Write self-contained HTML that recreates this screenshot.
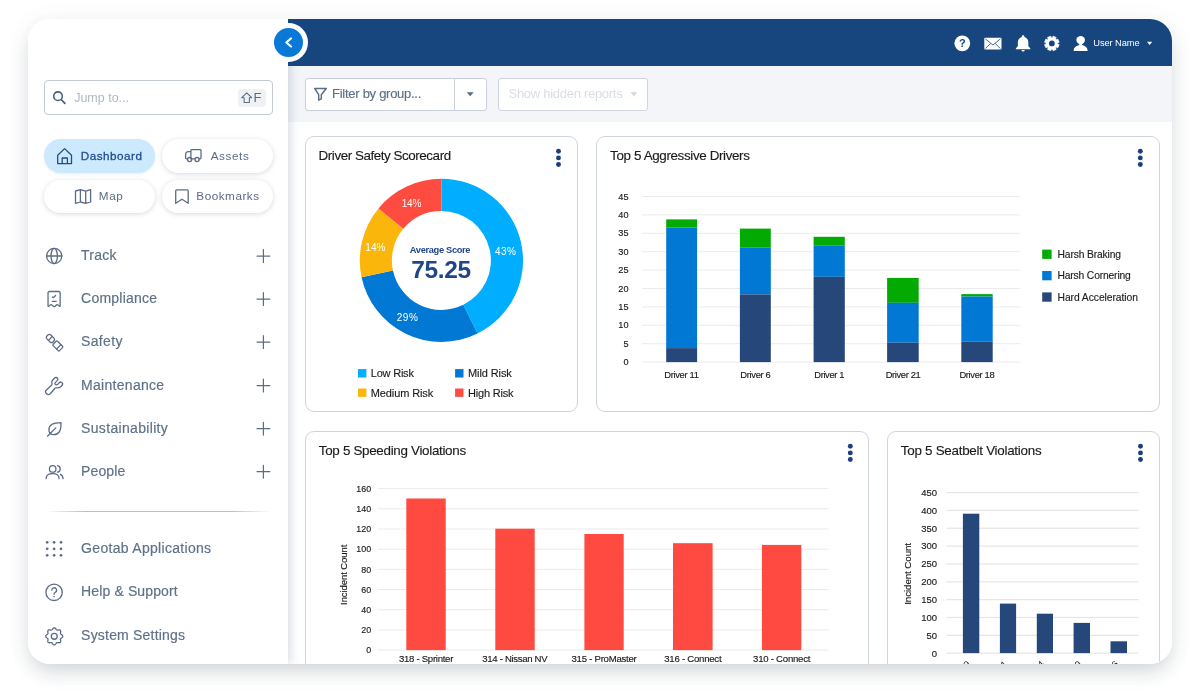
<!DOCTYPE html>
<html lang="en">
<head>
<meta charset="utf-8">
<title>Fleet Dashboard</title>
<style>
*{box-sizing:border-box;margin:0;padding:0}
html,body{width:1200px;height:695px;background:#fff;overflow:hidden}
body{font-family:"Liberation Sans",sans-serif;position:relative;color:#222}
#frame{position:absolute;left:28px;top:19px;width:1144px;height:645px;border-radius:22px;background:#fff;
 box-shadow:0 10px 20px -4px rgba(75,90,105,.24),0 2px 24px rgba(75,90,105,.075)}
#clip{position:absolute;left:28px;top:19px;width:1144px;height:645px;border-radius:22px;overflow:hidden;background:#fff}
#inner{position:absolute;left:-28px;top:-19px;width:1200px;height:695px;will-change:transform}
#header{position:absolute;left:288.3px;top:19px;width:884px;height:47.4px;background:#17467f}
#filterbar{position:absolute;left:288px;top:66px;width:884px;height:55.5px;background:#f3f5f9}
#sidebar{position:absolute;left:28px;top:19px;width:260.3px;height:645px;background:#fff;
 box-shadow:2px 0 10px rgba(80,95,120,.23)}
.t{position:absolute;white-space:nowrap;line-height:1}
.card{position:absolute;border:1px solid #ced4de;border-radius:9px;background:#fff}
.box{position:absolute;border:1px solid #cad0db;border-radius:3px;background:#fff}
.pill{position:absolute;height:33.5px;border-radius:17px;background:#fff;box-shadow:0 1px 5px rgba(90,105,130,.25)}
.pill.on{background:#cce9fd;box-shadow:0 1px 3px rgba(90,105,130,.12)}
svg{position:absolute;left:0;top:0;overflow:visible}
.ic{fill:none;stroke:#5a6d86;stroke-width:1.3;stroke-linecap:round;stroke-linejoin:round}
</style>
</head>
<body>
<div id="frame"></div>
<div id="clip"><div id="inner">

<div id="filterbar"></div>

<!-- filter controls -->
<div class="box" style="left:305px;top:78px;width:182px;height:32.5px"></div>
<div style="position:absolute;left:454px;top:78px;width:1px;height:32px;background:#cad0db"></div>
<div class="box" style="left:497.5px;top:78px;width:150px;height:32.5px;border-color:#d0d4df"></div>

<!-- cards -->
<div class="card" style="left:304.5px;top:135.5px;width:273.5px;height:276.5px"></div>
<div class="card" style="left:596px;top:135.5px;width:564px;height:276.5px"></div>
<div class="card" style="left:304.5px;top:430.5px;width:564.5px;height:260px"></div>
<div class="card" style="left:887px;top:430.5px;width:273px;height:260px"></div>

<svg width="1200" height="695" viewBox="0 0 1200 695">
<path d="M441.40 178.80 A81.6 81.6 0 0 1 477.53 333.57 L463.32 304.78 A49.5 49.5 0 0 0 441.40 210.90 Z" fill="#01adfe"/>
<path d="M477.53 333.57 A81.6 81.6 0 0 1 361.55 277.20 L392.96 270.59 A49.5 49.5 0 0 0 463.32 304.78 Z" fill="#0078d4"/>
<path d="M361.55 277.20 A81.6 81.6 0 0 1 378.53 208.39 L403.26 228.85 A49.5 49.5 0 0 0 392.96 270.59 Z" fill="#fab60b"/>
<path d="M378.53 208.39 A81.6 81.6 0 0 1 441.40 178.80 L441.40 210.90 A49.5 49.5 0 0 0 403.26 228.85 Z" fill="#fe4c41"/>
<rect x="358" y="369.1" width="8.4" height="8.4" fill="#01adfe"/>
<rect x="455.1" y="369.1" width="8.4" height="8.4" fill="#0078d4"/>
<rect x="358" y="388.5" width="8.4" height="8.4" fill="#fab60b"/>
<rect x="455.1" y="388.5" width="8.4" height="8.4" fill="#fe4c41"/>
<circle cx="558.5" cy="151.3" r="2.45" fill="#1a3f7e"/>
<circle cx="558.5" cy="157.9" r="2.45" fill="#1a3f7e"/>
<circle cx="558.5" cy="164.5" r="2.45" fill="#1a3f7e"/>
<circle cx="1140.3" cy="151.3" r="2.45" fill="#1a3f7e"/>
<circle cx="1140.3" cy="157.9" r="2.45" fill="#1a3f7e"/>
<circle cx="1140.3" cy="164.5" r="2.45" fill="#1a3f7e"/>
<circle cx="850.3" cy="446.3" r="2.45" fill="#1a3f7e"/>
<circle cx="850.3" cy="452.9" r="2.45" fill="#1a3f7e"/>
<circle cx="850.3" cy="459.5" r="2.45" fill="#1a3f7e"/>
<circle cx="1140.5" cy="446.3" r="2.45" fill="#1a3f7e"/>
<circle cx="1140.5" cy="452.9" r="2.45" fill="#1a3f7e"/>
<circle cx="1140.5" cy="459.5" r="2.45" fill="#1a3f7e"/>
<rect x="642" y="196.00" width="378.5" height="1" fill="#ebebeb"/>
<rect x="642" y="214.40" width="378.5" height="1" fill="#ebebeb"/>
<rect x="642" y="232.80" width="378.5" height="1" fill="#ebebeb"/>
<rect x="642" y="251.20" width="378.5" height="1" fill="#ebebeb"/>
<rect x="642" y="269.60" width="378.5" height="1" fill="#ebebeb"/>
<rect x="642" y="288.00" width="378.5" height="1" fill="#ebebeb"/>
<rect x="642" y="306.40" width="378.5" height="1" fill="#ebebeb"/>
<rect x="642" y="324.80" width="378.5" height="1" fill="#ebebeb"/>
<rect x="642" y="343.20" width="378.5" height="1" fill="#ebebeb"/>
<rect x="642" y="361.60" width="378.5" height="1" fill="#ebebeb"/>
<rect x="666.2" y="219.4" width="30.9" height="8.2" fill="#02aa02"/>
<rect x="666.2" y="227.6" width="30.9" height="120.5" fill="#0078d4"/>
<rect x="666.2" y="348.1" width="30.9" height="14.0" fill="#25477a"/>
<rect x="739.9" y="228.6" width="30.9" height="19.1" fill="#02aa02"/>
<rect x="739.9" y="247.7" width="30.9" height="46.7" fill="#0078d4"/>
<rect x="739.9" y="294.4" width="30.9" height="67.7" fill="#25477a"/>
<rect x="813.6" y="236.8" width="31.2" height="8.5" fill="#02aa02"/>
<rect x="813.6" y="245.3" width="31.2" height="31.5" fill="#0078d4"/>
<rect x="813.6" y="276.8" width="31.2" height="85.3" fill="#25477a"/>
<rect x="887.1" y="277.9" width="31.6" height="24.9" fill="#02aa02"/>
<rect x="887.1" y="302.8" width="31.6" height="39.9" fill="#0078d4"/>
<rect x="887.1" y="342.7" width="31.6" height="19.4" fill="#25477a"/>
<rect x="961.3" y="294.1" width="31.4" height="2.4" fill="#02aa02"/>
<rect x="961.3" y="296.5" width="31.4" height="45.0" fill="#0078d4"/>
<rect x="961.3" y="341.5" width="31.4" height="20.6" fill="#25477a"/>
<rect x="1042.2" y="249.6" width="9.4" height="9.3" fill="#02aa02"/>
<rect x="1042.2" y="271.0" width="9.4" height="9.3" fill="#0078d4"/>
<rect x="1042.2" y="292.4" width="9.4" height="9.3" fill="#25477a"/>
<rect x="378" y="488.10" width="450.6" height="1" fill="#ebebeb"/>
<rect x="378" y="508.29" width="450.6" height="1" fill="#ebebeb"/>
<rect x="378" y="528.48" width="450.6" height="1" fill="#ebebeb"/>
<rect x="378" y="548.67" width="450.6" height="1" fill="#ebebeb"/>
<rect x="378" y="568.86" width="450.6" height="1" fill="#ebebeb"/>
<rect x="378" y="589.05" width="450.6" height="1" fill="#ebebeb"/>
<rect x="378" y="609.24" width="450.6" height="1" fill="#ebebeb"/>
<rect x="378" y="629.43" width="450.6" height="1" fill="#ebebeb"/>
<rect x="378" y="649.62" width="450.6" height="1" fill="#ebebeb"/>
<rect x="406.3" y="498.5" width="39.4" height="151.6" fill="#fe4a40"/>
<rect x="495.3" y="528.7" width="39.4" height="121.4" fill="#fe4a40"/>
<rect x="584.4" y="534.0" width="39.3" height="116.1" fill="#fe4a40"/>
<rect x="673.0" y="543.2" width="39.6" height="106.9" fill="#fe4a40"/>
<rect x="761.9" y="544.9" width="39.4" height="105.2" fill="#fe4a40"/>
<rect x="946.5" y="492.00" width="192.2" height="1.2" fill="#e6e6e6"/>
<rect x="946.5" y="509.84" width="192.2" height="1.2" fill="#e6e6e6"/>
<rect x="946.5" y="527.68" width="192.2" height="1.2" fill="#e6e6e6"/>
<rect x="946.5" y="545.52" width="192.2" height="1.2" fill="#e6e6e6"/>
<rect x="946.5" y="563.36" width="192.2" height="1.2" fill="#e6e6e6"/>
<rect x="946.5" y="581.20" width="192.2" height="1.2" fill="#e6e6e6"/>
<rect x="946.5" y="599.04" width="192.2" height="1.2" fill="#e6e6e6"/>
<rect x="946.5" y="616.88" width="192.2" height="1.2" fill="#e6e6e6"/>
<rect x="946.5" y="634.72" width="192.2" height="1.2" fill="#e6e6e6"/>
<rect x="946.5" y="652.56" width="192.2" height="1.2" fill="#e6e6e6"/>
<rect x="962.9" y="513.7" width="16.4" height="139.4" fill="#25477a"/>
<rect x="999.9" y="603.6" width="16.2" height="49.5" fill="#25477a"/>
<rect x="1036.8" y="613.7" width="16.2" height="39.4" fill="#25477a"/>
<rect x="1073.6" y="622.9" width="16.4" height="30.2" fill="#25477a"/>
<rect x="1110.5" y="641.3" width="16.5" height="11.8" fill="#25477a"/>
<path d="M314.7 88.5 H326.3 L321.3 94.7 V98.9 L318.7 100.2 V94.7 Z" fill="none" stroke="#5a6d86" stroke-width="1.45" stroke-linejoin="round"/>
<path d="M466.7 92.2 H473.7 L470.2 96.2 Z" fill="#5a6d86"/>
<path d="M630.4 92.2 H637.4 L633.9 96.2 Z" fill="#d2d6df"/>
</svg>
<div class="t" style="font-size:13px;color:#5e7189;top:87.33px;-webkit-text-stroke:0.15px;letter-spacing:-0.279px;left:332.10px;">Filter by group...</div>
<div class="t" style="font-size:13px;color:#dadde6;top:87.33px;letter-spacing:-0.281px;left:508.50px;">Show hidden reports</div>
<div class="t" style="font-size:13.4px;color:#1c1c1c;top:149.43px;-webkit-text-stroke:0.14px;letter-spacing:-0.438px;left:318.60px;">Driver Safety Scorecard</div>
<div class="t" style="font-size:13.4px;color:#1c1c1c;top:149.43px;-webkit-text-stroke:0.14px;letter-spacing:-0.361px;left:610.10px;">Top 5 Aggressive Drivers</div>
<div class="t" style="font-size:13.4px;color:#1c1c1c;top:444.43px;-webkit-text-stroke:0.14px;letter-spacing:-0.305px;left:318.80px;">Top 5 Speeding Violations</div>
<div class="t" style="font-size:13.4px;color:#1c1c1c;top:444.43px;-webkit-text-stroke:0.14px;letter-spacing:-0.265px;left:900.80px;">Top 5 Seatbelt Violations</div>
<div class="t" style="font-size:10px;color:#ffffff;top:198.50px;letter-spacing:-0.208px;left:411.40px;transform:translate(-50%,0);">14%</div>
<div class="t" style="font-size:10px;color:#ffffff;top:242.90px;letter-spacing:0.042px;left:375.40px;transform:translate(-50%,0);">14%</div>
<div class="t" style="font-size:10px;color:#ffffff;top:247.10px;letter-spacing:0.342px;left:505.60px;transform:translate(-50%,0);">43%</div>
<div class="t" style="font-size:10px;color:#ffffff;top:313.10px;letter-spacing:0.542px;left:407.50px;transform:translate(-50%,0);">29%</div>
<div class="t" style="font-size:9.3px;color:#1f4788;top:245.84px;font-weight:700;letter-spacing:-0.340px;left:440.00px;transform:translate(-50%,0);">Average Score</div>
<div class="t" style="font-size:24.5px;color:#1f4788;top:258.30px;font-weight:700;letter-spacing:-0.378px;left:441.00px;transform:translate(-50%,0);">75.25</div>
<div class="t" style="font-size:11px;color:#1c1c1c;top:368.21px;-webkit-text-stroke:0.14px;letter-spacing:-0.218px;left:370.80px;">Low Risk</div>
<div class="t" style="font-size:11px;color:#1c1c1c;top:368.21px;-webkit-text-stroke:0.14px;letter-spacing:-0.103px;left:468.00px;">Mild Risk</div>
<div class="t" style="font-size:11px;color:#1c1c1c;top:387.61px;-webkit-text-stroke:0.14px;letter-spacing:-0.118px;left:370.80px;">Medium Risk</div>
<div class="t" style="font-size:11px;color:#1c1c1c;top:387.61px;-webkit-text-stroke:0.14px;letter-spacing:-0.197px;left:468.00px;">High Risk</div>
<div class="t" style="font-size:9.2px;color:#1a1a1a;top:192.59px;-webkit-text-stroke:0.14px;right:571.50px;">45</div>
<div class="t" style="font-size:9.2px;color:#1a1a1a;top:210.99px;-webkit-text-stroke:0.14px;right:571.50px;">40</div>
<div class="t" style="font-size:9.2px;color:#1a1a1a;top:229.39px;-webkit-text-stroke:0.14px;right:571.50px;">35</div>
<div class="t" style="font-size:9.2px;color:#1a1a1a;top:247.79px;-webkit-text-stroke:0.14px;right:571.50px;">30</div>
<div class="t" style="font-size:9.2px;color:#1a1a1a;top:266.19px;-webkit-text-stroke:0.14px;right:571.50px;">25</div>
<div class="t" style="font-size:9.2px;color:#1a1a1a;top:284.59px;-webkit-text-stroke:0.14px;right:571.50px;">20</div>
<div class="t" style="font-size:9.2px;color:#1a1a1a;top:302.99px;-webkit-text-stroke:0.14px;right:571.50px;">15</div>
<div class="t" style="font-size:9.2px;color:#1a1a1a;top:321.39px;-webkit-text-stroke:0.14px;right:571.50px;">10</div>
<div class="t" style="font-size:9.2px;color:#1a1a1a;top:339.79px;-webkit-text-stroke:0.14px;right:571.50px;">5</div>
<div class="t" style="font-size:9.2px;color:#1a1a1a;top:358.19px;-webkit-text-stroke:0.14px;right:571.50px;">0</div>
<div class="t" style="font-size:9.4px;color:#1a1a1a;top:370.39px;-webkit-text-stroke:0.14px;letter-spacing:-0.343px;left:681.40px;transform:translate(-50%,0);">Driver 11</div>
<div class="t" style="font-size:9.4px;color:#1a1a1a;top:370.39px;-webkit-text-stroke:0.14px;letter-spacing:-0.333px;left:755.40px;transform:translate(-50%,0);">Driver 6</div>
<div class="t" style="font-size:9.4px;color:#1a1a1a;top:370.39px;-webkit-text-stroke:0.14px;letter-spacing:-0.361px;left:829.20px;transform:translate(-50%,0);">Driver 1</div>
<div class="t" style="font-size:9.4px;color:#1a1a1a;top:370.39px;-webkit-text-stroke:0.14px;letter-spacing:-0.366px;left:903.00px;transform:translate(-50%,0);">Driver 21</div>
<div class="t" style="font-size:9.4px;color:#1a1a1a;top:370.39px;-webkit-text-stroke:0.14px;letter-spacing:-0.341px;left:976.90px;transform:translate(-50%,0);">Driver 18</div>
<div class="t" style="font-size:10.3px;color:#1c1c1c;top:249.95px;-webkit-text-stroke:0.14px;letter-spacing:-0.138px;left:1057.50px;">Harsh Braking</div>
<div class="t" style="font-size:10.3px;color:#1c1c1c;top:271.35px;-webkit-text-stroke:0.14px;letter-spacing:-0.160px;left:1057.50px;">Harsh Cornering</div>
<div class="t" style="font-size:10.3px;color:#1c1c1c;top:292.75px;-webkit-text-stroke:0.14px;letter-spacing:-0.049px;left:1057.50px;">Hard Acceleration</div>
<div class="t" style="font-size:8.9px;color:#1a1a1a;top:484.74px;-webkit-text-stroke:0.14px;right:828.90px;">160</div>
<div class="t" style="font-size:8.9px;color:#1a1a1a;top:504.94px;-webkit-text-stroke:0.14px;right:828.90px;">140</div>
<div class="t" style="font-size:8.9px;color:#1a1a1a;top:525.14px;-webkit-text-stroke:0.14px;right:828.90px;">120</div>
<div class="t" style="font-size:8.9px;color:#1a1a1a;top:545.34px;-webkit-text-stroke:0.14px;right:828.90px;">100</div>
<div class="t" style="font-size:8.9px;color:#1a1a1a;top:565.54px;-webkit-text-stroke:0.14px;right:828.90px;">80</div>
<div class="t" style="font-size:8.9px;color:#1a1a1a;top:585.74px;-webkit-text-stroke:0.14px;right:828.90px;">60</div>
<div class="t" style="font-size:8.9px;color:#1a1a1a;top:605.94px;-webkit-text-stroke:0.14px;right:828.90px;">40</div>
<div class="t" style="font-size:8.9px;color:#1a1a1a;top:626.14px;-webkit-text-stroke:0.14px;right:828.90px;">20</div>
<div class="t" style="font-size:8.9px;color:#1a1a1a;top:646.34px;-webkit-text-stroke:0.14px;right:828.90px;">0</div>
<div class="t" style="font-size:9.6px;color:#1a1a1a;top:570.30px;-webkit-text-stroke:0.14px;letter-spacing:-0.121px;left:343.50px;transform:translate(-50%,0) rotate(-90deg);">Incident Count</div>
<div class="t" style="font-size:9.6px;color:#1a1a1a;top:654.30px;-webkit-text-stroke:0.14px;letter-spacing:-0.287px;left:426.00px;transform:translate(-50%,0);">318 - Sprinter</div>
<div class="t" style="font-size:9.6px;color:#1a1a1a;top:654.30px;-webkit-text-stroke:0.14px;letter-spacing:-0.326px;left:514.80px;transform:translate(-50%,0);">314 - Nissan NV</div>
<div class="t" style="font-size:9.6px;color:#1a1a1a;top:654.30px;-webkit-text-stroke:0.14px;letter-spacing:-0.250px;left:604.00px;transform:translate(-50%,0);">315 - ProMaster</div>
<div class="t" style="font-size:9.6px;color:#1a1a1a;top:654.30px;-webkit-text-stroke:0.14px;letter-spacing:-0.247px;left:692.80px;transform:translate(-50%,0);">316 - Connect</div>
<div class="t" style="font-size:9.6px;color:#1a1a1a;top:654.30px;-webkit-text-stroke:0.14px;letter-spacing:-0.247px;left:781.60px;transform:translate(-50%,0);">310 - Connect</div>
<div class="t" style="font-size:9.5px;color:#1a1a1a;top:487.95px;-webkit-text-stroke:0.14px;right:262.90px;">450</div>
<div class="t" style="font-size:9.5px;color:#1a1a1a;top:505.79px;-webkit-text-stroke:0.14px;right:262.90px;">400</div>
<div class="t" style="font-size:9.5px;color:#1a1a1a;top:523.62px;-webkit-text-stroke:0.14px;right:262.90px;">350</div>
<div class="t" style="font-size:9.5px;color:#1a1a1a;top:541.47px;-webkit-text-stroke:0.14px;right:262.90px;">300</div>
<div class="t" style="font-size:9.5px;color:#1a1a1a;top:559.31px;-webkit-text-stroke:0.14px;right:262.90px;">250</div>
<div class="t" style="font-size:9.5px;color:#1a1a1a;top:577.15px;-webkit-text-stroke:0.14px;right:262.90px;">200</div>
<div class="t" style="font-size:9.5px;color:#1a1a1a;top:594.99px;-webkit-text-stroke:0.14px;right:262.90px;">150</div>
<div class="t" style="font-size:9.5px;color:#1a1a1a;top:612.83px;-webkit-text-stroke:0.14px;right:262.90px;">100</div>
<div class="t" style="font-size:9.5px;color:#1a1a1a;top:630.67px;-webkit-text-stroke:0.14px;right:262.90px;">50</div>
<div class="t" style="font-size:9.5px;color:#1a1a1a;top:648.51px;-webkit-text-stroke:0.14px;right:262.90px;">0</div>
<div class="t" style="font-size:9.8px;color:#1a1a1a;top:568.70px;-webkit-text-stroke:0.14px;letter-spacing:-0.107px;left:907.80px;transform:translate(-50%,0) rotate(-90deg);">Incident Count</div>
<!-- card 4 rotated x labels (clipped by frame) -->
<div class="t" style="font-size:9.5px;color:#2a2a2a;right:234.5px;top:659.4px;transform-origin:100% 0;transform:rotate(-45deg)">Driver 9</div>
<div class="t" style="font-size:9.5px;color:#2a2a2a;right:197.6px;top:659.4px;transform-origin:100% 0;transform:rotate(-45deg)">Driver 1</div>
<div class="t" style="font-size:9.5px;color:#2a2a2a;right:160.7px;top:659.4px;transform-origin:100% 0;transform:rotate(-45deg)">Driver 4</div>
<div class="t" style="font-size:9.5px;color:#2a2a2a;right:123.8px;top:659.4px;transform-origin:100% 0;transform:rotate(-45deg)">Driver 19</div>
<div class="t" style="font-size:9.5px;color:#2a2a2a;right:86.9px;top:659.4px;transform-origin:100% 0;transform:rotate(-45deg)">Driver 16</div>


<div id="sidebar"></div>

<!-- sidebar: search + pills -->
<div class="box" style="left:44px;top:80px;width:229px;height:35px;border-radius:4px;border-color:#c3cad6"></div>
<div style="position:absolute;left:238px;top:88.6px;width:27.5px;height:18.4px;border-radius:4px;background:#eff1f5"></div>
<div class="pill on" style="left:44px;top:139.4px;width:111.2px"></div>
<div class="pill" style="left:162.1px;top:139.4px;width:111.2px"></div>
<div class="pill" style="left:44px;top:179.8px;width:111.2px"></div>
<div class="pill" style="left:162.1px;top:179.8px;width:111.2px"></div>
<div style="position:absolute;left:45px;top:510.8px;width:227px;height:1.2px;background:linear-gradient(90deg,rgba(184,194,208,0),#b4bfce 18%,#b4bfce 82%,rgba(184,194,208,0))"></div>

<svg width="1200" height="695" viewBox="0 0 1200 695">
<circle cx="58" cy="96.2" r="4.3" fill="none" stroke="#46607c" stroke-width="1.6"/>
<path d="M61.2 99.5 L64.9 103.4" fill="none" stroke="#46607c" stroke-width="1.7" stroke-linecap="round"/>
<path d="M246.75 92.9 L251.7 97.7 H249.35 V102.4 H244.15 V97.7 H241.8 Z" fill="none" stroke="#5a6d86" stroke-width="1.05" stroke-linejoin="round"/>
<path d="M57.7 163.6 V155.2 L64.6 148.6 L71.5 155.2 V163.6 Z M62.2 163.6 V158 H67.4 V163.6" fill="none" stroke="#1f4e8c" stroke-width="1.3" stroke-linejoin="round" stroke-linecap="round"/>
<path class="ic" d="M190.9 158.9 V150.5 a.8 .8 0 0 1 .8 -.8 H200.2 a.8 .8 0 0 1 .8 .8 V158.1 a.8 .8 0 0 1 -.8 .8 H199.2 M191.8 158.9 H194.9 M190.9 151.6 H188.4 c-1.6 0 -2.8 1.6 -2.8 3.5 V158.1 a.8 .8 0 0 0 .8 .8 H187.4" />
<circle class="ic" cx="189.6" cy="159.6" r="2.1"/>
<circle class="ic" cx="197.05" cy="159.6" r="2.1"/>
<path class="ic" d="M75.5 191 L80.4 189.7 L85.7 191.1 L90.6 189.7 V202 L85.7 203.4 L80.4 202 L75.5 203.4 Z M80.4 189.7 V202 M85.7 191.1 V203.4" />
<path class="ic" d="M175.7 190.7 a.9 .9 0 0 1 .9 -.9 H187.3 a.9 .9 0 0 1 .9 .9 V203.3 L181.95 199.2 L175.7 203.3 Z" />
<path d="M257 256.1 H269.8 M263.4 249.70000000000002 V262.5" fill="none" stroke="#5a6d86" stroke-width="1.2" stroke-linecap="round"/>
<path d="M257 299.1 H269.8 M263.4 292.70000000000005 V305.5" fill="none" stroke="#5a6d86" stroke-width="1.2" stroke-linecap="round"/>
<path d="M257 342.1 H269.8 M263.4 335.70000000000005 V348.5" fill="none" stroke="#5a6d86" stroke-width="1.2" stroke-linecap="round"/>
<path d="M257 385.6 H269.8 M263.4 379.20000000000005 V392.0" fill="none" stroke="#5a6d86" stroke-width="1.2" stroke-linecap="round"/>
<path d="M257 428.7 H269.8 M263.4 422.3 V435.09999999999997" fill="none" stroke="#5a6d86" stroke-width="1.2" stroke-linecap="round"/>
<path d="M257 471.7 H269.8 M263.4 465.3 V478.09999999999997" fill="none" stroke="#5a6d86" stroke-width="1.2" stroke-linecap="round"/>
<circle class="ic" cx="54.2" cy="256" r="7.6"/>
<ellipse class="ic" cx="54.2" cy="256" rx="3.2" ry="7.6"/>
<path class="ic" d="M46.6 256 H61.8" />
<path class="ic" d="M48.05 306.3 V292.7 a1.2 1.2 0 0 1 1.2 -1.2 H58.95 a1.2 1.2 0 0 1 1.2 1.2 V306.3 C59.3 306.9 58.4 304.7 57.2 304.7 C56 304.7 55.3 306.7 54.1 306.7 C52.9 306.7 52.2 304.7 51.1 304.7 C49.9 304.7 49 306.9 48.05 306.3 Z M52.5 297 L53.5 297.6 L55.6 295.5 M52.3 301.3 H56.2" />
<g transform="translate(54.3 342.4) rotate(45)" class="ic"><rect x="-9.7" y="-2.7" width="8.4" height="5.4" rx="1.7"/><path d="M-5.6 -2.7 V2.7 M6.3 -3.1 V3.1"/><rect x=".5" y="-3.1" width="9" height="6.2" rx="1"/></g>
<path class="ic" d="M45.97 390.57 L51.67 385.05 C52.36 384.36 51.5 381.94 52.01 380.91 L54.6 377.97 C55.29 377.18 57.19 377.28 57.71 378.49 C58.16 379.52 57.71 380.22 57.02 380.91 L55.29 382.63 C54.6 383.39 54.95 384.36 55.81 384.77 C56.85 385.22 57.71 384.36 58.4 383.67 L59.44 382.56 C60.3 381.67 61.85 381.87 62.44 383.05 C62.99 384.19 62.37 385.4 60.82 386.71 C59.27 387.98 57.54 387.98 55.98 387.81 C55.47 387.74 55.12 388.16 54.78 388.5 L50.29 393.75 C49.08 394.89 47.52 394.72 46.32 393.51 C45.28 392.47 45.28 391.27 45.97 390.57 Z" />
<path class="ic" d="M61 422.6 C61.3 430.6 59 434.7 53.8 434.7 C50.7 434.7 48.9 432.5 48.9 429.7 C48.9 424.7 53 422.6 61 422.6 Z M47.6 436 L55.8 427.9" />
<circle class="ic" cx="52.7" cy="468.9" r="3.25"/>
<path class="ic" d="M46.1 478.7 C46.1 475.6 48.7 473.7 52.6 473.7 C56.5 473.7 59.1 475.6 59.1 478.7 M57.5 465.7 a3.25 3.25 0 0 1 0 6.4 M60.4 474.3 C62 475.1 63 476.6 63 478.7" />
<circle cx="47.2" cy="542.3" r="1.35" fill="#5a6d86"/>
<circle cx="47.2" cy="548.8" r="1.35" fill="#5a6d86"/>
<circle cx="47.2" cy="555.3" r="1.35" fill="#5a6d86"/>
<circle cx="54.1" cy="542.3" r="1.35" fill="#5a6d86"/>
<circle cx="54.1" cy="548.8" r="1.35" fill="#5a6d86"/>
<circle cx="54.1" cy="555.3" r="1.35" fill="#5a6d86"/>
<circle cx="61.0" cy="542.3" r="1.35" fill="#5a6d86"/>
<circle cx="61.0" cy="548.8" r="1.35" fill="#5a6d86"/>
<circle cx="61.0" cy="555.3" r="1.35" fill="#5a6d86"/>
<circle class="ic" cx="54.1" cy="592.3" r="8.2"/>
<path class="ic" d="M51.8 590.2 a2.4 2.4 0 1 1 3.5 2.1 c-.8 .45 -1.2 .9 -1.2 1.9" />
<circle cx="54.1" cy="596.6" r=".8" fill="#5a6d86"/>
<path class="ic" d="M54.25 627.75 L54.58 627.80 L54.91 627.94 L55.21 628.16 L55.50 628.44 L55.75 628.75 L55.99 629.07 L56.20 629.37 L56.42 629.63 L56.64 629.83 L56.87 629.97 L57.14 630.04 L57.43 630.05 L57.77 630.02 L58.14 629.96 L58.53 629.90 L58.93 629.86 L59.33 629.86 L59.70 629.92 L60.03 630.05 L60.30 630.25 L60.50 630.52 L60.63 630.85 L60.69 631.22 L60.69 631.62 L60.65 632.02 L60.59 632.41 L60.53 632.78 L60.50 633.12 L60.51 633.41 L60.58 633.68 L60.72 633.91 L60.92 634.13 L61.18 634.35 L61.48 634.56 L61.80 634.80 L62.11 635.05 L62.39 635.34 L62.61 635.64 L62.75 635.97 L62.80 636.30 L62.75 636.63 L62.61 636.96 L62.39 637.26 L62.11 637.55 L61.80 637.80 L61.48 638.04 L61.18 638.25 L60.92 638.47 L60.72 638.69 L60.58 638.92 L60.51 639.19 L60.50 639.48 L60.53 639.82 L60.59 640.19 L60.65 640.58 L60.69 640.98 L60.69 641.38 L60.63 641.75 L60.50 642.08 L60.30 642.35 L60.03 642.55 L59.70 642.68 L59.33 642.74 L58.93 642.74 L58.53 642.70 L58.14 642.64 L57.77 642.58 L57.43 642.55 L57.14 642.56 L56.87 642.63 L56.64 642.77 L56.42 642.97 L56.20 643.23 L55.99 643.53 L55.75 643.85 L55.50 644.16 L55.21 644.44 L54.91 644.66 L54.58 644.80 L54.25 644.85 L53.92 644.80 L53.59 644.66 L53.29 644.44 L53.00 644.16 L52.75 643.85 L52.51 643.53 L52.30 643.23 L52.08 642.97 L51.86 642.77 L51.63 642.63 L51.36 642.56 L51.07 642.55 L50.73 642.58 L50.36 642.64 L49.97 642.70 L49.57 642.74 L49.17 642.74 L48.80 642.68 L48.47 642.55 L48.20 642.35 L48.00 642.08 L47.87 641.75 L47.81 641.38 L47.81 640.98 L47.85 640.58 L47.91 640.19 L47.97 639.82 L48.00 639.48 L47.99 639.19 L47.92 638.92 L47.78 638.69 L47.58 638.47 L47.32 638.25 L47.02 638.04 L46.70 637.80 L46.39 637.55 L46.11 637.26 L45.89 636.96 L45.75 636.63 L45.70 636.30 L45.75 635.97 L45.89 635.64 L46.11 635.34 L46.39 635.05 L46.70 634.80 L47.02 634.56 L47.32 634.35 L47.58 634.13 L47.78 633.91 L47.92 633.68 L47.99 633.41 L48.00 633.12 L47.97 632.78 L47.91 632.41 L47.85 632.02 L47.81 631.62 L47.81 631.22 L47.87 630.85 L48.00 630.52 L48.20 630.25 L48.47 630.05 L48.80 629.92 L49.17 629.86 L49.57 629.86 L49.97 629.90 L50.36 629.96 L50.73 630.02 L51.07 630.05 L51.36 630.04 L51.63 629.97 L51.86 629.83 L52.08 629.63 L52.30 629.37 L52.51 629.07 L52.75 628.75 L53.00 628.44 L53.29 628.16 L53.59 627.94 L53.92 627.80 Z" />
<circle class="ic" cx="54.25" cy="636.3" r="2.95"/>
</svg>
<div class="t" style="font-size:12.5px;color:#b0b9c8;top:91.58px;letter-spacing:-0.010px;left:74.20px;">Jump to...</div>
<div class="t" style="font-size:13.1px;color:#5a6d86;top:91.02px;left:253.60px;">F</div>
<div class="t" style="font-size:11.7px;color:#1f4e8c;top:150.17px;-webkit-text-stroke:.28px;letter-spacing:0.489px;left:80.80px;">Dashboard</div>
<div class="t" style="font-size:11.7px;color:#5a6d86;top:150.17px;letter-spacing:0.604px;left:210.70px;">Assets</div>
<div class="t" style="font-size:11.7px;color:#5a6d86;top:190.47px;letter-spacing:0.625px;left:98.80px;">Map</div>
<div class="t" style="font-size:11.7px;color:#5a6d86;top:190.47px;letter-spacing:0.541px;left:196.30px;">Bookmarks</div>
<div class="t" style="font-size:14.0px;color:#5e7189;top:248.02px;-webkit-text-stroke:0.18px;letter-spacing:0.204px;left:81.10px;">Track</div>
<div class="t" style="font-size:14.0px;color:#5e7189;top:291.02px;-webkit-text-stroke:0.18px;letter-spacing:0.229px;left:81.10px;">Compliance</div>
<div class="t" style="font-size:14.0px;color:#5e7189;top:334.02px;-webkit-text-stroke:0.18px;letter-spacing:0.319px;left:81.10px;">Safety</div>
<div class="t" style="font-size:14.0px;color:#5e7189;top:378.02px;-webkit-text-stroke:0.18px;letter-spacing:0.283px;left:81.10px;">Maintenance</div>
<div class="t" style="font-size:14.0px;color:#5e7189;top:421.02px;-webkit-text-stroke:0.18px;letter-spacing:0.323px;left:81.10px;">Sustainability</div>
<div class="t" style="font-size:14.0px;color:#5e7189;top:464.02px;-webkit-text-stroke:0.18px;letter-spacing:0.101px;left:81.10px;">People</div>
<div class="t" style="font-size:14.0px;color:#5e7189;top:541.02px;-webkit-text-stroke:0.18px;letter-spacing:0.304px;left:81.10px;">Geotab Applications</div>
<div class="t" style="font-size:14.0px;color:#5e7189;top:584.02px;-webkit-text-stroke:0.18px;letter-spacing:0.127px;left:81.10px;">Help &amp; Support</div>
<div class="t" style="font-size:14.0px;color:#5e7189;top:628.02px;-webkit-text-stroke:0.18px;letter-spacing:0.203px;left:81.10px;">System Settings</div>

<div id="header"></div>
<!-- header -->
<svg width="1200" height="695" viewBox="0 0 1200 695">
<circle cx="962.3" cy="43.3" r="7.9" fill="#ffffff"/>
<rect x="984.3" y="37.8" width="17.2" height="11.7" rx=".8" fill="#ffffff"/>
<path d="M985.3 38.8 L992.9 45 L1000.5 38.8 M985.3 48.6 L990.7 43.4 M1000.5 48.6 L995.1 43.4" fill="none" stroke="#17467f" stroke-width=".8"/>
<path d="M1023.1 35.3 c-.75 0 -1.25 .55 -1.25 1.25 v.45 c-2.5 .65 -4 2.8 -4 5.5 v3.7 l-1.95 2 v1 h14.4 v-1 l-1.95 -2 v-3.7 c0 -2.7 -1.5 -4.85 -4 -5.5 v-.45 c0 -.7 -.5 -1.25 -1.25 -1.25 z M1021.5 50 a1.6 1.6 0 0 0 3.2 0 z" fill="#ffffff"/>
<path d="M1052.24 37.71 L1053.03 36.04 L1056.25 37.38 L1055.63 39.12 L1056.18 39.67 L1057.92 39.05 L1059.26 42.27 L1057.59 43.06 L1057.59 43.84 L1059.26 44.63 L1057.92 47.85 L1056.18 47.23 L1055.63 47.78 L1056.25 49.52 L1053.03 50.86 L1052.24 49.19 L1051.46 49.19 L1050.67 50.86 L1047.45 49.52 L1048.07 47.78 L1047.52 47.23 L1045.78 47.85 L1044.44 44.63 L1046.11 43.84 L1046.11 43.06 L1044.44 42.27 L1045.78 39.05 L1047.52 39.67 L1048.07 39.12 L1047.45 37.38 L1050.67 36.04 L1051.46 37.71 Z" fill="#ffffff" stroke="#ffffff" stroke-width=".5" stroke-linejoin="round"/>
<circle cx="1051.85" cy="43.45" r="2.9" fill="#17467f"/>
<ellipse cx="1080.65" cy="40.1" rx="4.3" ry="4.1" fill="#ffffff"/>
<path d="M1073.7 51 C1073.7 47.6 1075.6 46.4 1078 45.6 L1079.2 45 V43 H1082.1 V45 L1083.3 45.6 C1085.7 46.4 1087.6 47.6 1087.6 51 Z" fill="#ffffff"/>
<path d="M1147 41.8 H1152.3 L1149.65 45 Z" fill="#ffffff"/>
</svg>
<div class="t" style="font-size:9.3px;color:#ffffff;top:39.34px;letter-spacing:-0.089px;left:1093.30px;">User Name</div>
<div class="t" style="font-size:11px;color:#17467f;top:38.11px;font-weight:700;left:962.30px;transform:translate(-50%,0);">?</div>

<!-- sidebar toggle -->
<div style="position:absolute;left:269px;top:22.9px;width:39px;height:39px;border-radius:50%;background:#fff"></div>
<div style="position:absolute;left:274.1px;top:28px;width:28.9px;height:28.9px;border-radius:50%;background:#0a78d6"></div>
<svg width="1200" height="695" viewBox="0 0 1200 695"><path d="M291 38.4 L286.3 42.45 L291 46.5" fill="none" stroke="#fff" stroke-width="2.1" stroke-linecap="round" stroke-linejoin="round"/></svg>

</div></div>
</body>
</html>
